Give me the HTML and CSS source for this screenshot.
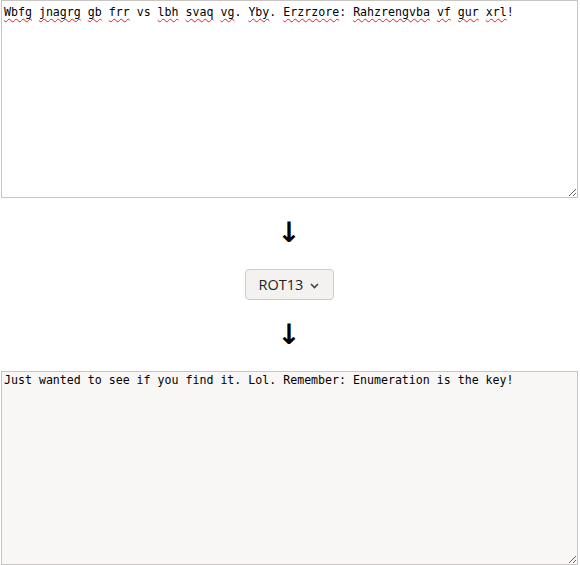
FILE: index.html
```html
<!DOCTYPE html>
<html>
<head>
<meta charset="utf-8">
<link rel="stylesheet" href="styles.css">
</head>
<body>
<div class="page">
  <div class="box box-in"><span class="sp">Wbfg</span> <span class="sp">jnagrg</span> <span class="sp">gb</span> <span class="sp">frr</span> vs <span class="sp">lbh</span> <span class="sp">svaq</span> <span class="sp">vg</span>. <span class="sp">Yby</span>. <span class="sp">Erzrzore</span>: <span class="sp">Rahzrengvba</span> <span class="sp">vf</span> <span class="sp">gur</span> <span class="sp">xrl</span>!</div>
  <div class="arrow">↓</div>
  <div class="select">ROT13 <svg class="chev" width="9" height="6" viewBox="0 0 9 6"><path d="M1 1 L4.5 4.5 L8 1" fill="none" stroke="#444" stroke-width="1.6"/></svg></div>
  <div class="arrow">↓</div>
  <textarea class="box box-out" readonly>Just wanted to see if you find it. Lol. Remember: Enumeration is the key!</textarea>
</div>
</body>
</html>
```
FILE: styles.css
```css
html, body {
  margin: 0;
  padding: 0;
  background: #ffffff;
}
.page {
  display: flex;
  flex-direction: column;
  align-items: center;
  width: 578px;
}
.box {
  box-sizing: border-box;
  width: 577px;
  margin: 0 0 0 1px;
  align-self: flex-start;
  font-family: "DejaVu Sans Mono", monospace;
  font-size: 11.6px;
  line-height: 14px;
  color: #000;
  border: 1px solid #c9c5c0;
  padding: 4px 2px 3px;
  resize: both;
  overflow: auto;
  outline: none;
  white-space: pre-wrap;
}
.box-in {
  height: 198px;
  background: #ffffff;
}
.sp {
  text-decoration: underline wavy #e0202a;
  text-decoration-skip-ink: none;
  text-underline-offset: 2px;
  text-decoration-thickness: 1.3px;
}
.box-out {
  display: block;
  height: 194px;
  padding-top: 1px;
  background: #f8f7f5;
}
.arrow {
  font-family: "DejaVu Sans", sans-serif;
  font-weight: bold;
  font-size: 28px;
  line-height: 28px;
  height: 28px;
  color: #000;
  margin: 21px 0 22px;
}
.select {
  box-sizing: border-box;
  height: 31px;
  width: 89px;
  display: flex;
  align-items: center;
  justify-content: center;
  gap: 7px;
  font-family: "Open Sans", sans-serif;
  font-size: 14.5px;
  color: #222;
  background: #f3f2f0;
  border: 1px solid #cfcbc6;
  border-radius: 4px;
}
.chev {
  margin-top: 2px;
}
```
